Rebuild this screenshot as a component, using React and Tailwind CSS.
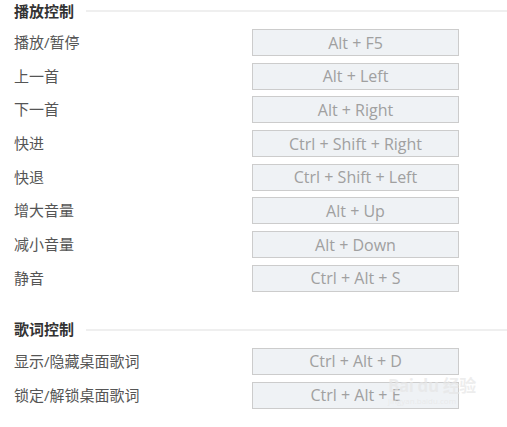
import React from "react";

const playback = [
  { name: "播放/暂停", keys: "Alt + F5" },
  { name: "上一首", keys: "Alt + Left" },
  { name: "下一首", keys: "Alt + Right" },
  { name: "快进", keys: "Ctrl + Shift + Right" },
  { name: "快退", keys: "Ctrl + Shift + Left" },
  { name: "增大音量", keys: "Alt + Up" },
  { name: "减小音量", keys: "Alt + Down" },
  { name: "静音", keys: "Ctrl + Alt + S" },
];

const lyrics = [
  { name: "显示/隐藏桌面歌词", keys: "Ctrl + Alt + D" },
  { name: "锁定/解锁桌面歌词", keys: "Ctrl + Alt + E" },
];

const font = {
  fontFamily: '"Open Sans", "Noto Sans CJK SC", sans-serif',
};

const Section = ({ title, items, className }) => (
  <div className={className}>
    {/* heading with rule */}
    <div className="flex items-center h-[22px]">
      <span className="text-[15px] font-bold text-[#333] leading-none">{title}</span>
      <div className="flex-1 h-[2px] bg-[#efefef] ml-[12px]" />
    </div>
    <div className="flex flex-col gap-[6.7px] mt-[7px]">
      {items.map((item) => (
        <div key={item.name} className="flex items-center h-[27px]">
          <span className="w-[238px] text-[15px] text-[#555] leading-none">{item.name}</span>
          <div className="w-[207px] h-[27px] border border-[#cccccc] bg-[#eff2f5] flex items-center justify-center text-[16px] text-[#a0a0a0] leading-none">
            {item.keys}
          </div>
        </div>
      ))}
    </div>
  </div>
);

const App = () => {
  return (
    <div className="relative w-[507px] h-[427px] bg-white pl-[14px] overflow-hidden" style={font}>
      <Section title="播放控制" items={playback} />
      <Section title="歌词控制" items={lyrics} className="mt-[27px]" />

      {/* watermark */}
      <div className="absolute left-[388px] top-[377px] flex flex-col items-start pointer-events-none">
        <span className="text-[17px] font-bold leading-none text-[#e6e6e6]/70 tracking-tight">Bai du 经验</span>
        <span className="text-[8px] leading-none mt-[3px] text-[#e6e6e6]/70">jingyan.baidu.com</span>
      </div>
    </div>
  );
};

export default App;
